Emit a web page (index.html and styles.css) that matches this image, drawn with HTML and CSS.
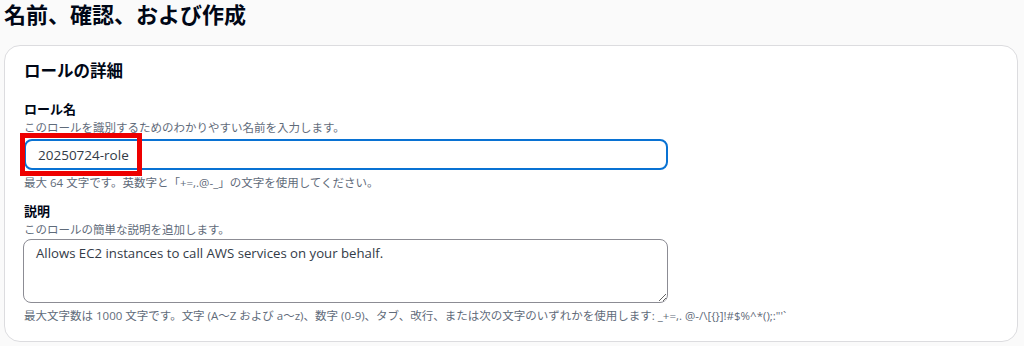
FILE: index.html
```html
<!DOCTYPE html>
<html>
<head>
  <meta charset="utf-8">
  <title>名前、確認、および作成</title>
  <link rel="stylesheet" href="styles.css">
</head>
<body>
<h1 class="page-title">名前、確認、および作成</h1>

<div class="card">
  <h2 class="card-title">ロールの詳細</h2>

  <!-- Role name -->
  <div class="field">
    <div class="field-label">ロール名</div>
    <div class="field-desc">このロールを識別するためのわかりやすい名前を入力します。</div>
    <div class="input-wrap">
      <input class="text-input" type="text" value="20250724-role">
      <span class="highlight"></span>
    </div>
    <div class="field-hint">最大 64 文字です。英数字と「+=,.@-_」の文字を使用してください。</div>
  </div>

  <!-- Description -->
  <div class="field">
    <div class="field-label">説明</div>
    <div class="field-desc">このロールの簡単な説明を追加します。</div>
    <textarea class="text-area">Allows EC2 instances to call AWS services on your behalf.</textarea>
    <div class="field-hint">最大文字数は 1000 文字です。文字 (A～Z および a～z)、数字 (0-9)、タブ、改行、または次の文字のいずれかを使用します: _+=,. @-/\[{}]!#$%^*();:"'`</div>
  </div>
</div>
</body>
</html>
```

FILE: styles.css
```css
/* Page */
body {
  margin: 0;
  padding: 0 6px 0 4px;
  background-color: #fafafa;
  font-family: "Open Sans", "Noto Sans CJK JP", sans-serif;
  color: #000716;
}

.page-title {
  margin: 0;
  font-size: 22px;
  line-height: 28px;
  font-weight: 700;
  height: 45px;
}

/* Container card */
.card {
  background-color: #ffffff;
  border: 1px solid #dcdcdf;
  border-radius: 16px;
  padding: 12px 20px 20px 19px;
  height: 263px;
}

.card-title {
  margin: 0 0 15px 0;
  font-size: 16.5px;
  line-height: 26px;
  font-weight: 700;
}

/* Form fields */
.field {
  margin-bottom: 10px;
}

.field-label {
  font-size: 13px;
  line-height: 20px;
  font-weight: 700;
}

.field-desc,
.field-hint {
  font-size: 11.5px;
  line-height: 17px;
  color: #5f6b7a;
}

.field-hint {
  margin-top: 4px;
}

.input-wrap {
  position: relative;
  width: 644px;
  margin-top: 3px;
}

.text-input {
  box-sizing: border-box;
  width: 644px;
  height: 31px;
  margin: 0;
  padding: 0 12px;
  border: 2px solid #0972d3;
  border-radius: 8px;
  font-family: inherit;
  font-size: 13.5px;
  color: #333b47;
  outline: none;
  display: block;
}

/* Red annotation box over the name input */
.highlight {
  position: absolute;
  left: -4px;
  top: -6px;
  width: 112px;
  height: 33px;
  border: 5px solid #ee0000;
}

.text-area {
  box-sizing: border-box;
  display: block;
  width: 645px;
  height: 64px;
  margin: 1px 0 0 -1px;
  padding: 4px 12px;
  border: 1px solid #8c8c94;
  border-radius: 8px;
  font-family: inherit;
  font-size: 13.2px;
  line-height: 18px;
  color: #333b47;
  resize: vertical;
}
```
